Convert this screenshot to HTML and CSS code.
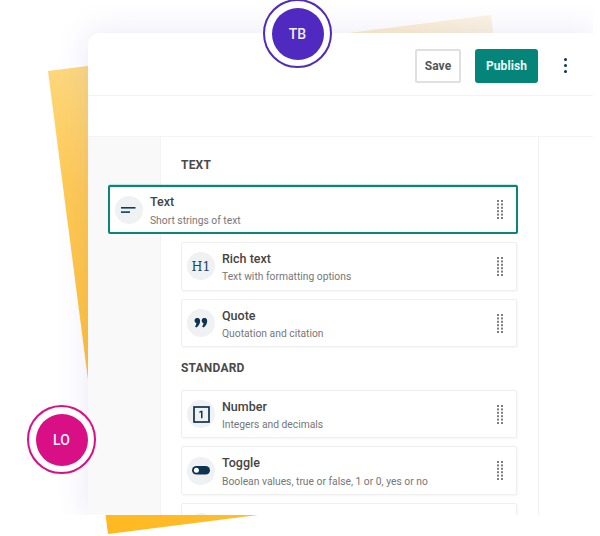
FILE: index.html
```html
<!DOCTYPE html>
<html lang="en">
<head>
<meta charset="utf-8">
<title>Content fields</title>
<link rel="stylesheet" href="styles.css">
</head>
<body>
<svg class="defs" width="0" height="0" aria-hidden="true">
  <symbol id="grip" viewBox="0 0 6 19">
    <g fill="#7d7d7d">
      <rect x="0" y="0" width="2" height="2"/><rect x="4" y="0" width="2" height="2"/>
      <rect x="0" y="3.4" width="2" height="2"/><rect x="4" y="3.4" width="2" height="2"/>
      <rect x="0" y="6.8" width="2" height="2"/><rect x="4" y="6.8" width="2" height="2"/>
      <rect x="0" y="10.2" width="2" height="2"/><rect x="4" y="10.2" width="2" height="2"/>
      <rect x="0" y="13.6" width="2" height="2"/><rect x="4" y="13.6" width="2" height="2"/>
      <rect x="0" y="17" width="2" height="2"/><rect x="4" y="17" width="2" height="2"/>
    </g>
  </symbol>
</svg>
<div class="stage">
  <div class="paper"></div>
  <div class="window">
    <header class="topbar">
      <button class="btn btn-save">Save</button>
      <button class="btn btn-publish">Publish</button>
      <span class="kebab"><i></i><i></i><i></i></span>
    </header>
    <div class="subbar"></div>
    <div class="body">
      <aside class="side"></aside>
      <main class="list">
        <h2 class="heading">TEXT</h2>
        <div class="rows">
          <div class="row row-active">
            <span class="icon">
              <svg width="16" height="8" viewBox="0 0 16 8"><rect x="0" y="1" width="14.5" height="1.6" fill="#0d3f5c"/><rect x="0" y="5.3" width="9" height="1.6" fill="#0d3f5c"/></svg>
            </span>
            <div class="info"><div class="title">Text</div><div class="desc">Short strings of text</div></div>
            <svg class="grip"><use href="#grip"/></svg>
          </div>
          <div class="row">
            <span class="icon icon-h1">H1</span>
            <div class="info"><div class="title">Rich text</div><div class="desc">Text with formatting options</div></div>
            <svg class="grip"><use href="#grip"/></svg>
          </div>
          <div class="row">
            <span class="icon">
              <svg width="14" height="10" viewBox="0 0 14 10"><path fill="#0d3450" d="M0.5 2.7a2.8 2.8 0 0 1 5.6 0c0 3-1.6 5.4-3.6 6.9L1 8.6c.8-.9 1.3-2 1.4-3.3A2.6 2.6 0 0 1 .5 2.7zM7.6 2.7a2.8 2.8 0 0 1 5.6 0c0 3-1.6 5.4-3.6 6.9L8.1 8.6c.8-.9 1.3-2 1.4-3.3a2.6 2.6 0 0 1-1.9-2.6z"/></svg>
            </span>
            <div class="info"><div class="title">Quote</div><div class="desc">Quotation and citation</div></div>
            <svg class="grip"><use href="#grip"/></svg>
          </div>
        </div>
        <h2 class="heading heading-next">STANDARD</h2>
        <div class="rows">
          <div class="row">
            <span class="icon">
              <svg width="17" height="17" viewBox="0 0 17 17"><rect x="1" y="1" width="15" height="15" fill="none" stroke="#0d3450" stroke-width="1.7"/><path fill="#0d3450" d="M8 4.7h1.5v7.6H8V6.3L6.4 6.9V5.6z"/></svg>
            </span>
            <div class="info"><div class="title">Number</div><div class="desc">Integers and decimals</div></div>
            <svg class="grip"><use href="#grip"/></svg>
          </div>
          <div class="row">
            <span class="icon">
              <svg width="18" height="9" viewBox="0 0 18 9"><rect width="18" height="8.6" rx="4.3" fill="#0d3450"/><circle cx="4.4" cy="4.3" r="2.5" fill="#fff"/></svg>
            </span>
            <div class="info"><div class="title">Toggle</div><div class="desc">Boolean values, true or false, 1 or 0, yes or no</div></div>
            <svg class="grip"><use href="#grip"/></svg>
          </div>
          <div class="row">
            <span class="icon"></span>
          </div>
        </div>
      </main>
      <div class="rail"></div>
    </div>
  </div>
  <div class="avatar avatar-tb"><span>TB</span></div>
  <div class="avatar avatar-lo"><span>LO</span></div>
</div>
</body>
</html>
```
FILE: styles.css
```css
* { box-sizing: border-box; }
html, body { margin: 0; padding: 0; background: #fff; }
body { font-family: Roboto, "Liberation Sans", sans-serif; }
.defs { position: absolute; }

.stage {
  position: relative;
  width: 600px;
  height: 536px;
  overflow: hidden;
  background: #fff;
  padding: 33px 7px 21px 88px;
}

.paper {
  position: absolute;
  left: 0;
  top: 0;
  width: 600px;
  height: 536px;
  background: linear-gradient(28deg, #ffb81f 7%, #ffc23a 27%, #ffca55 45%, #fdd678 57%, #fbf4e4 91%);
  clip-path: polygon(48px 71px, 491px 15px, 551px 478px, 108px 534px);
}

.window {
  position: relative;
  height: 482px;
  background: #fff;
  border-radius: 12px 0 0 0;
  box-shadow: 0 0 30px 4px rgba(84, 70, 190, 0.1);
  clip-path: inset(-40px 0 0 -40px);
  display: flex;
  flex-direction: column;
}

.topbar {
  flex: none;
  height: 63px;
  display: flex;
  align-items: center;
  justify-content: flex-end;
  padding: 3px 0 0;
  border-bottom: 1px solid #f3f3f6;
}

.btn {
  font: 700 12px/1 Roboto, "Liberation Sans", sans-serif;
  height: 34px;
  border-radius: 2px;
  padding: 0;
  letter-spacing: 0.1px;
}
.btn-save {
  width: 46px;
  background: #fff;
  border: 2px solid #e0e0e0;
  color: #555;
  margin-right: 14px;
}
.btn-publish {
  width: 63px;
  background: #05847a;
  border: 0;
  border-radius: 3px;
  color: #eafaf7;
}
.kebab {
  display: flex;
  flex-direction: column;
  gap: 2.6px;
  width: 4px;
  margin: 0 25.5px 0 25.5px;
}
.kebab i {
  display: block;
  width: 3.6px;
  height: 3.6px;
  border-radius: 50%;
  background: #0d3450;
}

.subbar {
  flex: none;
  height: 41px;
  border-bottom: 1px solid #f4f4f6;
}

.body {
  flex: 1;
  min-height: 0;
  display: grid;
  grid-template-columns: 72px 379px 1fr;
}
.side { background: #f9f9fa; }
.rail { background: #fff; }

.list {
  background: #fff;
  border-left: 1px solid #f3f3f5;
  border-right: 1px solid #f1f1f3;
  padding: 20px 21px 0 20px;
  overflow: visible;
}

.heading {
  margin: 0 0 12px;
  font-size: 12px;
  font-weight: 700;
  line-height: 16px;
  letter-spacing: 0.2px;
  color: #4a4a4a;
}
.heading-next { margin-top: 13px; margin-bottom: 13.5px; }

.rows {
  display: flex;
  flex-direction: column;
  gap: 8px;
}

.row {
  flex: none;
  height: 48.6px;
  display: flex;
  align-items: center;
  padding: 0 13px 0 5px;
  background: #fff;
  border: 1px solid #efeff0;
  border-radius: 2px;
  box-shadow: 1px 1px 2px rgba(0, 0, 0, 0.04);
}
.row-active {
  height: 49.2px;
  margin: 0 -1px 0 -73px;
  border: 2px solid #0d8478;
  box-shadow: 0 -1px 1px rgba(13, 160, 150, 0.25);
}

.icon {
  flex: none;
  width: 28px;
  height: 28px;
  border-radius: 50%;
  background: #f0f1f2;
  display: flex;
  align-items: center;
  justify-content: center;
  margin-right: 7px;
}
.icon-h1 {
  font-family: "DejaVu Serif", "Liberation Serif", serif;
  font-size: 12.5px;
  color: #1b4664;
}

.info { flex: 1; min-width: 0; padding-top: 2.5px; }
.title {
  font-size: 12.5px;
  font-weight: 500;
  line-height: 14px;
  color: #444;
  margin-bottom: 4.5px;
}
.desc {
  font-size: 10.3px;
  line-height: 13px;
  color: #777;
}

.grip {
  flex: none;
  width: 6px;
  height: 19px;
}

.avatar {
  position: absolute;
  width: 69px;
  height: 69px;
  border-radius: 50%;
  background: #fff;
  border: 2px solid;
  display: flex;
  align-items: center;
  justify-content: center;
}
.avatar span {
  width: 52px;
  height: 52px;
  border-radius: 50%;
  display: flex;
  align-items: center;
  justify-content: center;
  color: #f3eefc;
  font-size: 14px;
  font-weight: 500;
}
.avatar-tb { left: 263px; top: -1px; border-color: #4f2bb8; }
.avatar-tb span { background: #4f29c0; }
.avatar-lo { left: 27px; top: 405px; border-color: #d80f85; }
.avatar-lo span { background: #d80f85; }
```
